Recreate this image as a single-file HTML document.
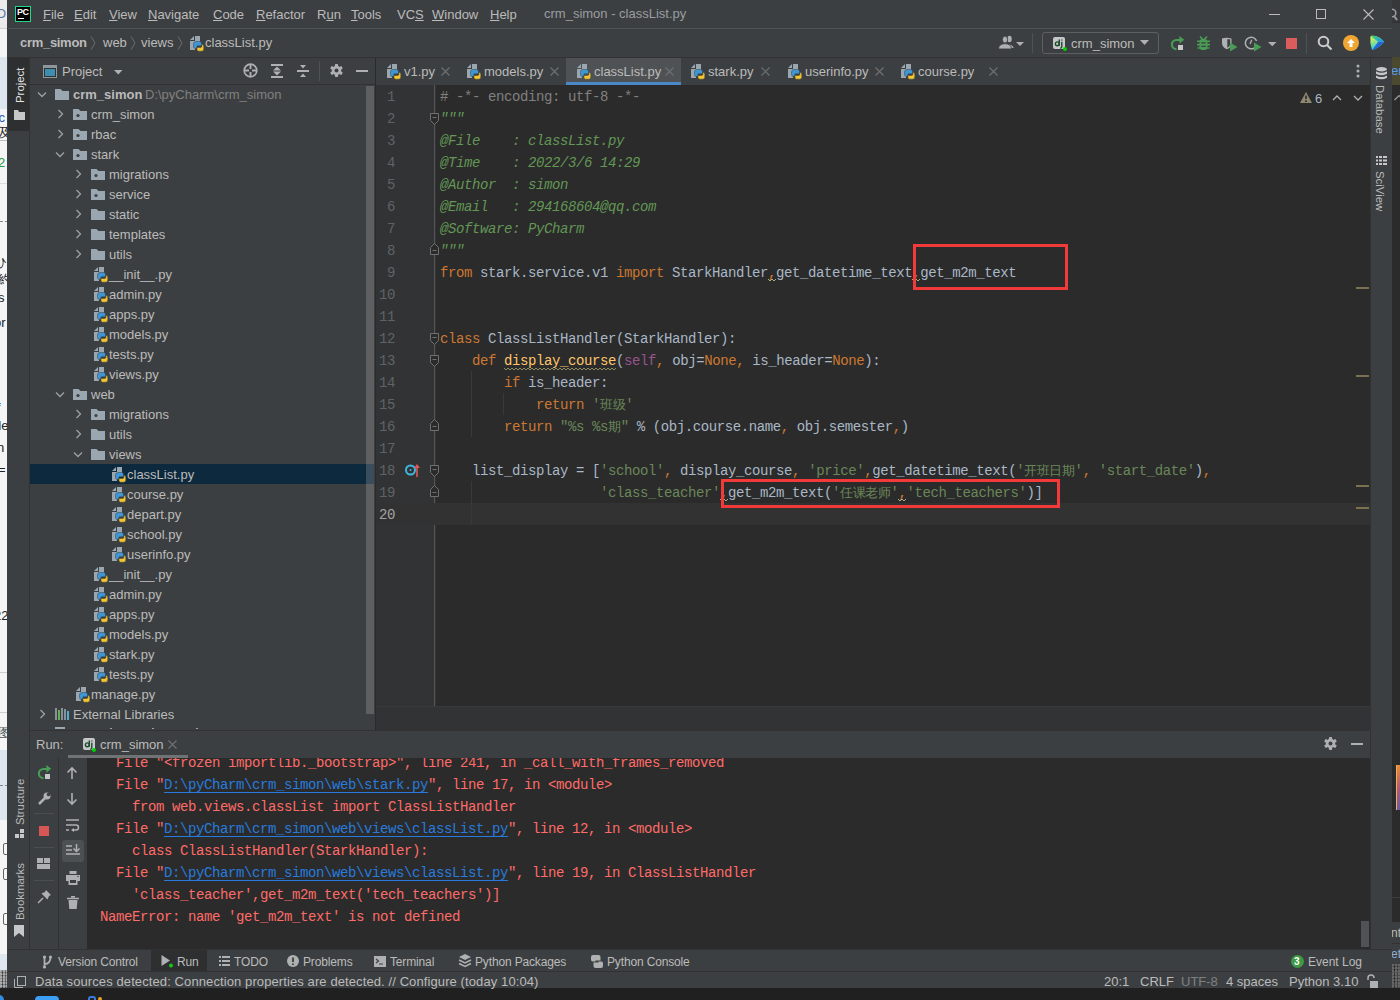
<!DOCTYPE html>
<html><head><meta charset="utf-8"><style>
*{margin:0;padding:0;box-sizing:border-box}
html,body{width:1400px;height:1000px;overflow:hidden;background:#2b2b2b;font-family:"Liberation Sans", sans-serif;}
.a{position:absolute}
.t{position:absolute;white-space:pre;font-family:"Liberation Sans", sans-serif;font-size:13px;color:#bbbbbb;line-height:16px}
.s{position:absolute;white-space:pre;font-family:"Liberation Sans", sans-serif;font-size:12px;color:#bbbbbb;line-height:14px}
.v{font-size:11.4px !important}
.m{position:absolute;white-space:pre;font-family:"Liberation Mono", monospace;font-size:14px;letter-spacing:-0.4px;line-height:22px;color:#a9b7c6}
.kw{color:#cc7832} .str{color:#6a8759} .doc{color:#629755;font-style:italic} .cm{color:#808080} .slf{color:#94558d} .fn{color:#ffc66d} .cj{font-size:13px;letter-spacing:-0.4px}
.er{color:#ff6b68} .lk{color:#287bde;text-decoration:underline;text-underline-offset:3px}
svg{position:absolute;overflow:visible}
</style></head><body>

<div class="a" style="left:0;top:0;width:8px;height:1000px;background:#f5f5f5"></div>
<div class="a" style="left:0;top:0;width:8px;height:28px;background:#ebebeb"></div>
<div class="t" style="left:-4px;top:6px;color:#5a7ca8">O</div>
<div class="a" style="left:0;top:28px;width:8px;height:1px;background:#d0d0d0"></div>
<div class="a" style="left:0;top:57px;width:8px;height:52px;background:#dde5ee"></div>
<div class="t" style="left:-5px;top:110px;color:#2a5db0">.c</div>
<div class="t" style="left:-2px;top:125px;color:#222">及</div>
<div class="a" style="left:0;top:140px;width:8px;height:1px;background:#bbb"></div>
<div class="t" style="left:-2px;top:155px;color:#2a9a40">2</div>
<div class="a" style="left:0;top:183px;width:8px;height:1px;background:#ddd"></div>
<div class="a" style="left:0;top:221px;width:8px;height:1px;border-top:1px dashed #888"></div>
<div class="t" style="left:-6px;top:255px;color:#222">ひ</div>
<div class="t" style="left:-2px;top:272px;color:#222">約</div>
<div class="t" style="left:-2px;top:290px;color:#222">s</div>
<div class="t" style="left:-6px;top:315px;color:#222">or</div>
<div class="t" style="left:-3px;top:400px;color:#2a5db0">f</div>
<div class="t" style="left:-6px;top:418px;color:#222">de</div>
<div class="t" style="left:-3px;top:440px;color:#222">n</div>
<div class="t" style="left:-2px;top:462px;color:#222">=</div>
<div class="t" style="left:-6px;top:608px;color:#222">22</div>
<div class="a" style="left:0;top:672px;width:8px;height:1px;background:#ccc"></div>
<div class="a" style="left:0;top:712px;width:8px;height:1px;background:#ccc"></div>
<div class="t" style="left:-2px;top:725px;color:#555">图</div>
<div class="a" style="left:0;top:750px;width:8px;height:70px;background:#dde5ee"></div>
<div class="a" style="left:0;top:785px;width:8px;height:1px;border-top:1px dashed #888"></div>
<div class="a" style="left:3px;top:843px;width:6px;height:12px;border:1px solid #666;border-radius:2px"></div>
<div class="a" style="left:3px;top:868px;width:6px;height:12px;border:1px solid #666;border-radius:2px"></div>
<div class="a" style="left:3px;top:913px;width:6px;height:12px;border:1px solid #666;border-radius:2px"></div>
<div class="a" style="left:0;top:954px;width:8px;height:16px;background:#dfe6ee"></div>
<div class="a" style="left:0;top:970px;width:8px;height:18px;background:radial-gradient(circle at 30% 40%,#aaa 0 1px,transparent 2px) 0 0/3px 3px,radial-gradient(circle at 70% 60%,#333 0 1px,transparent 2px) 0 0/4px 4px,#666"></div>
<div class="a" style="left:1392px;top:0;width:8px;height:1000px;background:#2b2b2b"></div>
<div class="a" style="left:1392px;top:0;width:8px;height:22px;background:#36383a"></div>
<svg style="left:1390px;top:8px" width="10" height="14"><circle cx="2" cy="5" r="3.8" stroke="#9a9da0" stroke-width="1.6" fill="none"/><path d="M4.5 8.5l2.5 3.5" stroke="#9a9da0" stroke-width="2"/></svg>
<div class="a" style="left:1392px;top:22px;width:8px;height:1px;background:#323232"></div>
<div class="a" style="left:1392px;top:23px;width:8px;height:34px;background:#3c3f41"></div>
<div class="a" style="left:1392px;top:57px;width:8px;height:28px;background:#4b4a30"></div>
<div class="t" style="left:1391px;top:63px;color:#589df6">er</div>
<svg style="left:1394px;top:95px" width="8" height="6"><path d="M0.5 5L5 0.5L9.5 5" stroke="#9a9da0" stroke-width="1.2" fill="none"/></svg>
<div class="a" style="left:1396px;top:765px;width:4px;height:45px;background:linear-gradient(180deg,#e98b3a,#b05a7a,#6a5aa8);border-left:1px solid #f0b050"></div>
<div class="a" style="left:1392px;top:897px;width:8px;height:1px;background:#3c3f41"></div>
<div class="a" style="left:1392px;top:922px;width:8px;height:42px;background:#3c3f41"></div>
<div class="s" style="left:1391px;top:926px;color:#bbbbbb">nt</div>
<div class="a" style="left:1392px;top:943px;width:8px;height:1px;background:#323232"></div>
<div class="s" style="left:1391px;top:947px;color:#8fb0d8">et</div>
<div class="a" style="left:1392px;top:964px;width:8px;height:24px;background:radial-gradient(circle at 30% 40%,#666 0 1px,transparent 2px) 0 0/3px 3px,radial-gradient(circle at 70% 60%,#222 0 1px,transparent 2px) 0 0/4px 4px,#4a4a4a"></div>
<div class="a" style="left:0;top:988px;width:1400px;height:12px;background:#202020"></div>
<div class="a" style="left:-6px;top:995px;width:10px;height:10px;border-radius:50%;background:#2f8fe8"></div>
<div class="a" style="left:35px;top:996px;width:24px;height:8px;border-radius:4px;background:#3a9ff5"></div>
<div class="a" style="left:88px;top:996px;width:8px;height:6px;border-radius:3px 3px 0 0;border:2px solid #3b7be0;border-bottom:none"></div>
<div class="a" style="left:98px;top:997px;width:4px;height:4px;border-radius:50%;background:#f0a020"></div>
<div class="a" style="left:7px;top:0;width:1385px;height:988px;background:#3c3f41"></div>
<div class="a" style="left:8px;top:28px;width:1384px;height:1px;background:#4f5355"></div>
<div class="a" style="left:15px;top:6px;width:16px;height:16px;background:#000;border:1px solid #21d789"></div>
<div class="a" style="left:17px;top:7px;font:bold 9px/10px 'Liberation Sans';color:#fff;letter-spacing:-0.5px">PC</div>
<div class="a" style="left:18px;top:18px;width:6px;height:1px;background:#fff"></div>
<div class="t" style="left:43px;top:7px"><span style="text-decoration:underline;text-underline-offset:1px">F</span>ile</div>
<div class="t" style="left:74px;top:7px"><span style="text-decoration:underline;text-underline-offset:1px">E</span>dit</div>
<div class="t" style="left:109px;top:7px"><span style="text-decoration:underline;text-underline-offset:1px">V</span>iew</div>
<div class="t" style="left:148px;top:7px"><span style="text-decoration:underline;text-underline-offset:1px">N</span>avigate</div>
<div class="t" style="left:213px;top:7px"><span style="text-decoration:underline;text-underline-offset:1px">C</span>ode</div>
<div class="t" style="left:256px;top:7px"><span style="text-decoration:underline;text-underline-offset:1px">R</span>efactor</div>
<div class="t" style="left:317px;top:7px">R<span style="text-decoration:underline;text-underline-offset:1px">u</span>n</div>
<div class="t" style="left:351px;top:7px"><span style="text-decoration:underline;text-underline-offset:1px">T</span>ools</div>
<div class="t" style="left:397px;top:7px">VC<span style="text-decoration:underline;text-underline-offset:1px">S</span></div>
<div class="t" style="left:432px;top:7px"><span style="text-decoration:underline;text-underline-offset:1px">W</span>indow</div>
<div class="t" style="left:490px;top:7px"><span style="text-decoration:underline;text-underline-offset:1px">H</span>elp</div>
<div class="t" style="left:544px;top:6px;color:#9a9da0">crm_simon - classList.py</div>
<div class="a" style="left:1269px;top:14px;width:11px;height:1px;background:#bbb"></div>
<div class="a" style="left:1316px;top:9px;width:10px;height:10px;border:1px solid #bbb"></div>
<svg style="left:1363px;top:9px" width="11" height="11"><path d="M0.5 0.5L10.5 10.5M10.5 0.5L0.5 10.5" stroke="#bbb" stroke-width="1.1"/></svg>
<div class="a" style="left:8px;top:57px;width:1384px;height:1px;background:#323232"></div>
<div class="t" style="left:20px;top:35px;font-weight:bold;letter-spacing:-0.3px">crm_simon</div>
<svg style="left:90px;top:36px" width="6" height="14"><path d="M1 0.5L5 7L1 13.5" stroke="#6b6e70" fill="none"/></svg>
<div class="t" style="left:103px;top:35px">web</div>
<svg style="left:130px;top:36px" width="6" height="14"><path d="M1 0.5L5 7L1 13.5" stroke="#6b6e70" fill="none"/></svg>
<div class="t" style="left:141px;top:35px">views</div>
<svg style="left:177px;top:36px" width="6" height="14"><path d="M1 0.5L5 7L1 13.5" stroke="#6b6e70" fill="none"/></svg>
<svg style="left:189px;top:35px" width="16" height="16" viewBox="0 0 16 16"><path d="M1 5L5 1V5Z" fill="#9aa7b0"/><path d="M6 1H11V8H6Z" fill="#9aa7b0"/><path d="M1 6H6V15H1Z" fill="#9aa7b0"/><path d="M7 6.5H10.8Q12.5 6.5 12.5 8.2V10.8H8.8Q7.8 10.8 7.8 11.8V13.5H6.5Q4.5 13.5 4.5 11.5V9Q4.5 6.5 7 6.5Z" fill="#3d96d6" stroke="#3c3f41" stroke-width="0.5"/><path d="M9.5 16.2H12.8Q14.8 16.2 14.8 14V11.2Q14.8 9.2 12.9 9.2V11.3Q12.9 12.4 11.8 12.4H8V14.5Q8 16.2 9.5 16.2Z" fill="#f3c52e" stroke="#3c3f41" stroke-width="0.5"/></svg>
<div class="t" style="left:205px;top:35px">classList.py</div>
<svg style="left:998px;top:35px" width="28" height="16"><ellipse cx="11.5" cy="4" rx="2.2" ry="3.2" fill="#aeb0b2"/><path d="M9 9.5Q14 9 15.5 12.5V13H10Z" fill="#aeb0b2"/><ellipse cx="7" cy="4.6" rx="2.6" ry="3.5" fill="#aeb0b2" stroke="#3c3f41" stroke-width="0.9"/><path d="M0.5 14Q0.5 9 7 8.6Q13.5 9 13.5 14Z" fill="#aeb0b2" stroke="#3c3f41" stroke-width="0.9"/><path d="M18 7h8l-4 4z" fill="#aeb0b2"/></svg>
<div class="a" style="left:1032px;top:33px;width:1px;height:20px;background:#515151"></div>
<div class="a" style="left:1042px;top:32px;width:117px;height:22px;border:1px solid #5e6060;border-radius:3px"></div>
<div class="a" style="left:1053px;top:37px;width:12px;height:12px;background:#c5c7c9;border-radius:2px"></div>
<svg style="left:1053px;top:37px" width="12" height="12"><circle cx="4.3" cy="6.8" r="1.9" stroke="#1d4a2a" stroke-width="1.4" fill="none"/><path d="M6.3 2.5v6.3M8.8 4.8v4.8q0 1.6-1.6 1.6M8.8 2.5v1" stroke="#1d4a2a" stroke-width="1.4" fill="none"/></svg>
<div class="a" style="left:1063px;top:47px;width:4px;height:4px;background:#00d000;border-radius:50%"></div>
<div class="t" style="left:1071px;top:36px">crm_simon</div>
<svg style="left:1140px;top:40px" width="9" height="6"><path d="M0 0h9l-4.5 5z" fill="#aeb0b2"/></svg>
<svg style="left:1170px;top:35px" width="16" height="16"><path d="M6.5 14.2A4.6 4.6 0 0 1 6.5 5H10" stroke="#499c54" stroke-width="2.1" fill="none"/><path d="M9.4 0.9L14.2 4.8L9.4 8.8Z" fill="#499c54"/><rect x="8" y="10" width="5" height="5" fill="#c4c6c8"/></svg>
<svg style="left:1197px;top:36px" width="13" height="14"><path d="M3 0.5L5.5 3.2M10 0.5L7.5 3.2M0 5.2H13M0 8.6H13M0.5 12H12.5" stroke="#499c54" stroke-width="1.6"/><rect x="2.5" y="2.8" width="8" height="11.2" rx="3.6" fill="#499c54"/><path d="M4.3 6.9H8.7M4.3 10.3H8.7" stroke="#3c3f41" stroke-width="1.3"/></svg>
<svg style="left:1221px;top:37px" width="17" height="15"><path d="M1 1.5Q5 0 10.5 1.5V6Q10.5 10.5 6 12.2Q1 10.5 1 6Z" fill="#aeb0b2"/><path d="M6.3 2.2H9.2V6Q9.2 9.5 6.3 10.8Z" fill="#3c3f41"/><path d="M9 5.5l7.5 4.5l-7.5 4.5z" fill="#499c54"/></svg>
<svg style="left:1245px;top:36px" width="17" height="16"><path d="M9.5 11.8A5.8 5.8 0 1 1 11.6 5" stroke="#aeb0b2" stroke-width="1.5" fill="none"/><path d="M6.8 3.8L5 8" stroke="#aeb0b2" stroke-width="1.3"/><path d="M9 6.5l7.5 4.5l-7.5 4.5z" fill="#499c54"/></svg>
<svg style="left:1268px;top:42px" width="9" height="6"><path d="M0 0h8.5l-4.25 4.2z" fill="#aeb0b2"/></svg>
<div class="a" style="left:1286px;top:38px;width:11px;height:11px;background:#db5c5c"></div>
<div class="a" style="left:1306px;top:33px;width:1px;height:21px;background:#515151"></div>
<svg style="left:1317px;top:35px" width="16" height="16"><circle cx="6.5" cy="6.5" r="4.8" stroke="#c9cbcd" stroke-width="2" fill="none"/><path d="M10 10l4.5 4.5" stroke="#c9cbcd" stroke-width="2.2"/></svg>
<div class="a" style="left:1343px;top:35px;width:16px;height:16px;border-radius:50%;background:#f0a732"></div>
<svg style="left:1346px;top:38px" width="10" height="10"><path d="M5 1L1 5h2.5v4h3V5H9z" fill="#fff"/></svg>
<svg style="left:1370px;top:35px" width="15" height="16"><defs><linearGradient id="tbl" x1="0" y1="0" x2="0.3" y2="1"><stop offset="0" stop-color="#fbf53a"/><stop offset="1" stop-color="#20cde6"/></linearGradient><linearGradient id="tbr" x1="0" y1="0" x2="1" y2="0.6"><stop offset="0" stop-color="#3fd872"/><stop offset="1" stop-color="#1b9cf0"/></linearGradient></defs><path d="M0.5 1Q8 0 14 6.8Q9 13.5 2 15Q-0.5 8 0.5 1Z" fill="url(#tbl)"/><path d="M0.5 1Q8 0 14 6.8H8.3Z" fill="url(#tbr)"/><path d="M8.3 6.8H14Q9 13.5 2 15Z" fill="#2368d6"/></svg>
<div class="a" style="left:29px;top:58px;width:1px;height:892px;background:#323232"></div>
<div class="a" style="left:8px;top:58px;width:21px;height:73px;background:#2d2f30"></div>
<div class="s v" style="transform:rotate(-90deg);transform-origin:left top;top:103px;left:13px;color:#e4e6e8">Project</div>
<svg style="left:14px;top:109px" width="12" height="11"><path d="M0 1h4l1 2h6v8h-11z" fill="#c5c7c9"/></svg>
<div class="a" style="left:30px;top:84px;width:346px;height:1px;background:#323232"></div>
<svg style="left:43px;top:65px" width="14" height="13"><rect width="14" height="13" fill="#8d979c"/><rect x="1" y="3" width="12" height="9" fill="#303234"/><rect x="2" y="4" width="10" height="7" fill="#3e8eb2"/></svg>
<div class="t" style="left:62px;top:64px">Project</div>
<svg style="left:114px;top:70px" width="9" height="6"><path d="M0 0h8.5l-4.25 4.5z" fill="#aeb0b2"/></svg>
<svg style="left:243px;top:63px" width="15" height="15"><circle cx="7.5" cy="7.5" r="6.3" stroke="#aeb0b2" stroke-width="1.7" fill="none"/><path d="M7.5 1.5V6M7.5 9V13.5M1.5 7.5H6M9 7.5H13.5" stroke="#aeb0b2" stroke-width="1.9"/></svg>
<svg style="left:271px;top:64px" width="12" height="14"><path d="M0 1H12M0 13H12" stroke="#aeb0b2" stroke-width="2"/><path d="M6 2.6L10 6.6H2Z M2 7.4H10L6 11.4Z" fill="#aeb0b2"/></svg>
<svg style="left:297px;top:64px" width="12" height="14"><path d="M0 7H12" stroke="#aeb0b2" stroke-width="2"/><path d="M3 1H9L6 4.5Z M6 9.5L9 13H3Z" fill="#aeb0b2"/></svg>
<div class="a" style="left:319px;top:61px;width:1px;height:20px;background:#515151"></div>
<svg style="left:330px;top:64px" width="13" height="13"><rect x="4.9" y="0" width="3.2" height="13" rx="0.8" transform="rotate(0 6.5 6.5)" fill="#aeb0b2"/><rect x="4.9" y="0" width="3.2" height="13" rx="0.8" transform="rotate(60 6.5 6.5)" fill="#aeb0b2"/><rect x="4.9" y="0" width="3.2" height="13" rx="0.8" transform="rotate(120 6.5 6.5)" fill="#aeb0b2"/><circle cx="6.5" cy="6.5" r="4.68" fill="#aeb0b2"/><circle cx="6.5" cy="6.5" r="1.95" fill="#3c3f41"/></svg>
<div class="a" style="left:356px;top:70px;width:12px;height:2px;background:#aeb0b2"></div>
<div class="a" style="left:366px;top:86px;width:8px;height:628px;background:#5d5f61"></div>
<div class="a" style="left:375px;top:58px;width:1px;height:672px;background:#2b2b2b"></div>
<div class="a" style="left:30px;top:464px;width:336px;height:20px;background:#0d293e"></div>
<div class="a" style="left:366px;top:464px;width:8px;height:20px;background:#3a4d5c"></div>
<svg style="left:37px;top:91px" width="10" height="8"><path d="M1 1.5L5 5.5L9 1.5" stroke="#9da0a2" stroke-width="1.3" fill="none"/></svg>
<svg style="left:55px;top:86px" width="16" height="16" viewBox="0 0 16 16"><path d="M0 3H5.5L7.5 5H14V14H0Z" fill="#9aa7b0"/></svg>
<div class="t" style="left:73px;top:87px;font-weight:bold">crm_simon</div>
<div class="t" style="left:145px;top:87px;color:#808080">D:\pyCharm\crm_simon</div>
<svg style="left:57px;top:109px" width="8" height="10"><path d="M1.5 1L5.5 5L1.5 9" stroke="#9da0a2" stroke-width="1.3" fill="none"/></svg>
<svg style="left:73px;top:106px" width="16" height="16" viewBox="0 0 16 16"><path d="M0 3H5.5L7.5 5H14V14H0Z" fill="#9aa7b0"/><circle cx="5" cy="9.5" r="1.6" fill="#3c3f41"/></svg>
<div class="t" style="left:91px;top:107px">crm_simon</div>
<svg style="left:57px;top:129px" width="8" height="10"><path d="M1.5 1L5.5 5L1.5 9" stroke="#9da0a2" stroke-width="1.3" fill="none"/></svg>
<svg style="left:73px;top:126px" width="16" height="16" viewBox="0 0 16 16"><path d="M0 3H5.5L7.5 5H14V14H0Z" fill="#9aa7b0"/><circle cx="5" cy="9.5" r="1.6" fill="#3c3f41"/></svg>
<div class="t" style="left:91px;top:127px">rbac</div>
<svg style="left:55px;top:151px" width="10" height="8"><path d="M1 1.5L5 5.5L9 1.5" stroke="#9da0a2" stroke-width="1.3" fill="none"/></svg>
<svg style="left:73px;top:146px" width="16" height="16" viewBox="0 0 16 16"><path d="M0 3H5.5L7.5 5H14V14H0Z" fill="#9aa7b0"/><circle cx="5" cy="9.5" r="1.6" fill="#3c3f41"/></svg>
<div class="t" style="left:91px;top:147px">stark</div>
<svg style="left:75px;top:169px" width="8" height="10"><path d="M1.5 1L5.5 5L1.5 9" stroke="#9da0a2" stroke-width="1.3" fill="none"/></svg>
<svg style="left:91px;top:166px" width="16" height="16" viewBox="0 0 16 16"><path d="M0 3H5.5L7.5 5H14V14H0Z" fill="#9aa7b0"/><circle cx="5" cy="9.5" r="1.6" fill="#3c3f41"/></svg>
<div class="t" style="left:109px;top:167px">migrations</div>
<svg style="left:75px;top:189px" width="8" height="10"><path d="M1.5 1L5.5 5L1.5 9" stroke="#9da0a2" stroke-width="1.3" fill="none"/></svg>
<svg style="left:91px;top:186px" width="16" height="16" viewBox="0 0 16 16"><path d="M0 3H5.5L7.5 5H14V14H0Z" fill="#9aa7b0"/><circle cx="5" cy="9.5" r="1.6" fill="#3c3f41"/></svg>
<div class="t" style="left:109px;top:187px">service</div>
<svg style="left:75px;top:209px" width="8" height="10"><path d="M1.5 1L5.5 5L1.5 9" stroke="#9da0a2" stroke-width="1.3" fill="none"/></svg>
<svg style="left:91px;top:206px" width="16" height="16" viewBox="0 0 16 16"><path d="M0 3H5.5L7.5 5H14V14H0Z" fill="#9aa7b0"/></svg>
<div class="t" style="left:109px;top:207px">static</div>
<svg style="left:75px;top:229px" width="8" height="10"><path d="M1.5 1L5.5 5L1.5 9" stroke="#9da0a2" stroke-width="1.3" fill="none"/></svg>
<svg style="left:91px;top:226px" width="16" height="16" viewBox="0 0 16 16"><path d="M0 3H5.5L7.5 5H14V14H0Z" fill="#9aa7b0"/></svg>
<div class="t" style="left:109px;top:227px">templates</div>
<svg style="left:75px;top:249px" width="8" height="10"><path d="M1.5 1L5.5 5L1.5 9" stroke="#9da0a2" stroke-width="1.3" fill="none"/></svg>
<svg style="left:91px;top:246px" width="16" height="16" viewBox="0 0 16 16"><path d="M0 3H5.5L7.5 5H14V14H0Z" fill="#9aa7b0"/></svg>
<div class="t" style="left:109px;top:247px">utils</div>
<svg style="left:93px;top:266px" width="16" height="16" viewBox="0 0 16 16"><path d="M1 5L5 1V5Z" fill="#9aa7b0"/><path d="M6 1H11V8H6Z" fill="#9aa7b0"/><path d="M1 6H6V15H1Z" fill="#9aa7b0"/><path d="M7 6.5H10.8Q12.5 6.5 12.5 8.2V10.8H8.8Q7.8 10.8 7.8 11.8V13.5H6.5Q4.5 13.5 4.5 11.5V9Q4.5 6.5 7 6.5Z" fill="#3d96d6" stroke="#3c3f41" stroke-width="0.5"/><path d="M9.5 16.2H12.8Q14.8 16.2 14.8 14V11.2Q14.8 9.2 12.9 9.2V11.3Q12.9 12.4 11.8 12.4H8V14.5Q8 16.2 9.5 16.2Z" fill="#f3c52e" stroke="#3c3f41" stroke-width="0.5"/></svg>
<div class="t" style="left:109px;top:267px">__init__.py</div>
<svg style="left:93px;top:286px" width="16" height="16" viewBox="0 0 16 16"><path d="M1 5L5 1V5Z" fill="#9aa7b0"/><path d="M6 1H11V8H6Z" fill="#9aa7b0"/><path d="M1 6H6V15H1Z" fill="#9aa7b0"/><path d="M7 6.5H10.8Q12.5 6.5 12.5 8.2V10.8H8.8Q7.8 10.8 7.8 11.8V13.5H6.5Q4.5 13.5 4.5 11.5V9Q4.5 6.5 7 6.5Z" fill="#3d96d6" stroke="#3c3f41" stroke-width="0.5"/><path d="M9.5 16.2H12.8Q14.8 16.2 14.8 14V11.2Q14.8 9.2 12.9 9.2V11.3Q12.9 12.4 11.8 12.4H8V14.5Q8 16.2 9.5 16.2Z" fill="#f3c52e" stroke="#3c3f41" stroke-width="0.5"/></svg>
<div class="t" style="left:109px;top:287px">admin.py</div>
<svg style="left:93px;top:306px" width="16" height="16" viewBox="0 0 16 16"><path d="M1 5L5 1V5Z" fill="#9aa7b0"/><path d="M6 1H11V8H6Z" fill="#9aa7b0"/><path d="M1 6H6V15H1Z" fill="#9aa7b0"/><path d="M7 6.5H10.8Q12.5 6.5 12.5 8.2V10.8H8.8Q7.8 10.8 7.8 11.8V13.5H6.5Q4.5 13.5 4.5 11.5V9Q4.5 6.5 7 6.5Z" fill="#3d96d6" stroke="#3c3f41" stroke-width="0.5"/><path d="M9.5 16.2H12.8Q14.8 16.2 14.8 14V11.2Q14.8 9.2 12.9 9.2V11.3Q12.9 12.4 11.8 12.4H8V14.5Q8 16.2 9.5 16.2Z" fill="#f3c52e" stroke="#3c3f41" stroke-width="0.5"/></svg>
<div class="t" style="left:109px;top:307px">apps.py</div>
<svg style="left:93px;top:326px" width="16" height="16" viewBox="0 0 16 16"><path d="M1 5L5 1V5Z" fill="#9aa7b0"/><path d="M6 1H11V8H6Z" fill="#9aa7b0"/><path d="M1 6H6V15H1Z" fill="#9aa7b0"/><path d="M7 6.5H10.8Q12.5 6.5 12.5 8.2V10.8H8.8Q7.8 10.8 7.8 11.8V13.5H6.5Q4.5 13.5 4.5 11.5V9Q4.5 6.5 7 6.5Z" fill="#3d96d6" stroke="#3c3f41" stroke-width="0.5"/><path d="M9.5 16.2H12.8Q14.8 16.2 14.8 14V11.2Q14.8 9.2 12.9 9.2V11.3Q12.9 12.4 11.8 12.4H8V14.5Q8 16.2 9.5 16.2Z" fill="#f3c52e" stroke="#3c3f41" stroke-width="0.5"/></svg>
<div class="t" style="left:109px;top:327px">models.py</div>
<svg style="left:93px;top:346px" width="16" height="16" viewBox="0 0 16 16"><path d="M1 5L5 1V5Z" fill="#9aa7b0"/><path d="M6 1H11V8H6Z" fill="#9aa7b0"/><path d="M1 6H6V15H1Z" fill="#9aa7b0"/><path d="M7 6.5H10.8Q12.5 6.5 12.5 8.2V10.8H8.8Q7.8 10.8 7.8 11.8V13.5H6.5Q4.5 13.5 4.5 11.5V9Q4.5 6.5 7 6.5Z" fill="#3d96d6" stroke="#3c3f41" stroke-width="0.5"/><path d="M9.5 16.2H12.8Q14.8 16.2 14.8 14V11.2Q14.8 9.2 12.9 9.2V11.3Q12.9 12.4 11.8 12.4H8V14.5Q8 16.2 9.5 16.2Z" fill="#f3c52e" stroke="#3c3f41" stroke-width="0.5"/></svg>
<div class="t" style="left:109px;top:347px">tests.py</div>
<svg style="left:93px;top:366px" width="16" height="16" viewBox="0 0 16 16"><path d="M1 5L5 1V5Z" fill="#9aa7b0"/><path d="M6 1H11V8H6Z" fill="#9aa7b0"/><path d="M1 6H6V15H1Z" fill="#9aa7b0"/><path d="M7 6.5H10.8Q12.5 6.5 12.5 8.2V10.8H8.8Q7.8 10.8 7.8 11.8V13.5H6.5Q4.5 13.5 4.5 11.5V9Q4.5 6.5 7 6.5Z" fill="#3d96d6" stroke="#3c3f41" stroke-width="0.5"/><path d="M9.5 16.2H12.8Q14.8 16.2 14.8 14V11.2Q14.8 9.2 12.9 9.2V11.3Q12.9 12.4 11.8 12.4H8V14.5Q8 16.2 9.5 16.2Z" fill="#f3c52e" stroke="#3c3f41" stroke-width="0.5"/></svg>
<div class="t" style="left:109px;top:367px">views.py</div>
<svg style="left:55px;top:391px" width="10" height="8"><path d="M1 1.5L5 5.5L9 1.5" stroke="#9da0a2" stroke-width="1.3" fill="none"/></svg>
<svg style="left:73px;top:386px" width="16" height="16" viewBox="0 0 16 16"><path d="M0 3H5.5L7.5 5H14V14H0Z" fill="#9aa7b0"/><circle cx="5" cy="9.5" r="1.6" fill="#3c3f41"/></svg>
<div class="t" style="left:91px;top:387px">web</div>
<svg style="left:75px;top:409px" width="8" height="10"><path d="M1.5 1L5.5 5L1.5 9" stroke="#9da0a2" stroke-width="1.3" fill="none"/></svg>
<svg style="left:91px;top:406px" width="16" height="16" viewBox="0 0 16 16"><path d="M0 3H5.5L7.5 5H14V14H0Z" fill="#9aa7b0"/><circle cx="5" cy="9.5" r="1.6" fill="#3c3f41"/></svg>
<div class="t" style="left:109px;top:407px">migrations</div>
<svg style="left:75px;top:429px" width="8" height="10"><path d="M1.5 1L5.5 5L1.5 9" stroke="#9da0a2" stroke-width="1.3" fill="none"/></svg>
<svg style="left:91px;top:426px" width="16" height="16" viewBox="0 0 16 16"><path d="M0 3H5.5L7.5 5H14V14H0Z" fill="#9aa7b0"/></svg>
<div class="t" style="left:109px;top:427px">utils</div>
<svg style="left:73px;top:451px" width="10" height="8"><path d="M1 1.5L5 5.5L9 1.5" stroke="#9da0a2" stroke-width="1.3" fill="none"/></svg>
<svg style="left:91px;top:446px" width="16" height="16" viewBox="0 0 16 16"><path d="M0 3H5.5L7.5 5H14V14H0Z" fill="#9aa7b0"/></svg>
<div class="t" style="left:109px;top:447px">views</div>
<svg style="left:111px;top:466px" width="16" height="16" viewBox="0 0 16 16"><path d="M1 5L5 1V5Z" fill="#9aa7b0"/><path d="M6 1H11V8H6Z" fill="#9aa7b0"/><path d="M1 6H6V15H1Z" fill="#9aa7b0"/><path d="M7 6.5H10.8Q12.5 6.5 12.5 8.2V10.8H8.8Q7.8 10.8 7.8 11.8V13.5H6.5Q4.5 13.5 4.5 11.5V9Q4.5 6.5 7 6.5Z" fill="#3d96d6" stroke="#3c3f41" stroke-width="0.5"/><path d="M9.5 16.2H12.8Q14.8 16.2 14.8 14V11.2Q14.8 9.2 12.9 9.2V11.3Q12.9 12.4 11.8 12.4H8V14.5Q8 16.2 9.5 16.2Z" fill="#f3c52e" stroke="#3c3f41" stroke-width="0.5"/></svg>
<div class="t" style="left:127px;top:467px">classList.py</div>
<svg style="left:111px;top:486px" width="16" height="16" viewBox="0 0 16 16"><path d="M1 5L5 1V5Z" fill="#9aa7b0"/><path d="M6 1H11V8H6Z" fill="#9aa7b0"/><path d="M1 6H6V15H1Z" fill="#9aa7b0"/><path d="M7 6.5H10.8Q12.5 6.5 12.5 8.2V10.8H8.8Q7.8 10.8 7.8 11.8V13.5H6.5Q4.5 13.5 4.5 11.5V9Q4.5 6.5 7 6.5Z" fill="#3d96d6" stroke="#3c3f41" stroke-width="0.5"/><path d="M9.5 16.2H12.8Q14.8 16.2 14.8 14V11.2Q14.8 9.2 12.9 9.2V11.3Q12.9 12.4 11.8 12.4H8V14.5Q8 16.2 9.5 16.2Z" fill="#f3c52e" stroke="#3c3f41" stroke-width="0.5"/></svg>
<div class="t" style="left:127px;top:487px">course.py</div>
<svg style="left:111px;top:506px" width="16" height="16" viewBox="0 0 16 16"><path d="M1 5L5 1V5Z" fill="#9aa7b0"/><path d="M6 1H11V8H6Z" fill="#9aa7b0"/><path d="M1 6H6V15H1Z" fill="#9aa7b0"/><path d="M7 6.5H10.8Q12.5 6.5 12.5 8.2V10.8H8.8Q7.8 10.8 7.8 11.8V13.5H6.5Q4.5 13.5 4.5 11.5V9Q4.5 6.5 7 6.5Z" fill="#3d96d6" stroke="#3c3f41" stroke-width="0.5"/><path d="M9.5 16.2H12.8Q14.8 16.2 14.8 14V11.2Q14.8 9.2 12.9 9.2V11.3Q12.9 12.4 11.8 12.4H8V14.5Q8 16.2 9.5 16.2Z" fill="#f3c52e" stroke="#3c3f41" stroke-width="0.5"/></svg>
<div class="t" style="left:127px;top:507px">depart.py</div>
<svg style="left:111px;top:526px" width="16" height="16" viewBox="0 0 16 16"><path d="M1 5L5 1V5Z" fill="#9aa7b0"/><path d="M6 1H11V8H6Z" fill="#9aa7b0"/><path d="M1 6H6V15H1Z" fill="#9aa7b0"/><path d="M7 6.5H10.8Q12.5 6.5 12.5 8.2V10.8H8.8Q7.8 10.8 7.8 11.8V13.5H6.5Q4.5 13.5 4.5 11.5V9Q4.5 6.5 7 6.5Z" fill="#3d96d6" stroke="#3c3f41" stroke-width="0.5"/><path d="M9.5 16.2H12.8Q14.8 16.2 14.8 14V11.2Q14.8 9.2 12.9 9.2V11.3Q12.9 12.4 11.8 12.4H8V14.5Q8 16.2 9.5 16.2Z" fill="#f3c52e" stroke="#3c3f41" stroke-width="0.5"/></svg>
<div class="t" style="left:127px;top:527px">school.py</div>
<svg style="left:111px;top:546px" width="16" height="16" viewBox="0 0 16 16"><path d="M1 5L5 1V5Z" fill="#9aa7b0"/><path d="M6 1H11V8H6Z" fill="#9aa7b0"/><path d="M1 6H6V15H1Z" fill="#9aa7b0"/><path d="M7 6.5H10.8Q12.5 6.5 12.5 8.2V10.8H8.8Q7.8 10.8 7.8 11.8V13.5H6.5Q4.5 13.5 4.5 11.5V9Q4.5 6.5 7 6.5Z" fill="#3d96d6" stroke="#3c3f41" stroke-width="0.5"/><path d="M9.5 16.2H12.8Q14.8 16.2 14.8 14V11.2Q14.8 9.2 12.9 9.2V11.3Q12.9 12.4 11.8 12.4H8V14.5Q8 16.2 9.5 16.2Z" fill="#f3c52e" stroke="#3c3f41" stroke-width="0.5"/></svg>
<div class="t" style="left:127px;top:547px">userinfo.py</div>
<svg style="left:93px;top:566px" width="16" height="16" viewBox="0 0 16 16"><path d="M1 5L5 1V5Z" fill="#9aa7b0"/><path d="M6 1H11V8H6Z" fill="#9aa7b0"/><path d="M1 6H6V15H1Z" fill="#9aa7b0"/><path d="M7 6.5H10.8Q12.5 6.5 12.5 8.2V10.8H8.8Q7.8 10.8 7.8 11.8V13.5H6.5Q4.5 13.5 4.5 11.5V9Q4.5 6.5 7 6.5Z" fill="#3d96d6" stroke="#3c3f41" stroke-width="0.5"/><path d="M9.5 16.2H12.8Q14.8 16.2 14.8 14V11.2Q14.8 9.2 12.9 9.2V11.3Q12.9 12.4 11.8 12.4H8V14.5Q8 16.2 9.5 16.2Z" fill="#f3c52e" stroke="#3c3f41" stroke-width="0.5"/></svg>
<div class="t" style="left:109px;top:567px">__init__.py</div>
<svg style="left:93px;top:586px" width="16" height="16" viewBox="0 0 16 16"><path d="M1 5L5 1V5Z" fill="#9aa7b0"/><path d="M6 1H11V8H6Z" fill="#9aa7b0"/><path d="M1 6H6V15H1Z" fill="#9aa7b0"/><path d="M7 6.5H10.8Q12.5 6.5 12.5 8.2V10.8H8.8Q7.8 10.8 7.8 11.8V13.5H6.5Q4.5 13.5 4.5 11.5V9Q4.5 6.5 7 6.5Z" fill="#3d96d6" stroke="#3c3f41" stroke-width="0.5"/><path d="M9.5 16.2H12.8Q14.8 16.2 14.8 14V11.2Q14.8 9.2 12.9 9.2V11.3Q12.9 12.4 11.8 12.4H8V14.5Q8 16.2 9.5 16.2Z" fill="#f3c52e" stroke="#3c3f41" stroke-width="0.5"/></svg>
<div class="t" style="left:109px;top:587px">admin.py</div>
<svg style="left:93px;top:606px" width="16" height="16" viewBox="0 0 16 16"><path d="M1 5L5 1V5Z" fill="#9aa7b0"/><path d="M6 1H11V8H6Z" fill="#9aa7b0"/><path d="M1 6H6V15H1Z" fill="#9aa7b0"/><path d="M7 6.5H10.8Q12.5 6.5 12.5 8.2V10.8H8.8Q7.8 10.8 7.8 11.8V13.5H6.5Q4.5 13.5 4.5 11.5V9Q4.5 6.5 7 6.5Z" fill="#3d96d6" stroke="#3c3f41" stroke-width="0.5"/><path d="M9.5 16.2H12.8Q14.8 16.2 14.8 14V11.2Q14.8 9.2 12.9 9.2V11.3Q12.9 12.4 11.8 12.4H8V14.5Q8 16.2 9.5 16.2Z" fill="#f3c52e" stroke="#3c3f41" stroke-width="0.5"/></svg>
<div class="t" style="left:109px;top:607px">apps.py</div>
<svg style="left:93px;top:626px" width="16" height="16" viewBox="0 0 16 16"><path d="M1 5L5 1V5Z" fill="#9aa7b0"/><path d="M6 1H11V8H6Z" fill="#9aa7b0"/><path d="M1 6H6V15H1Z" fill="#9aa7b0"/><path d="M7 6.5H10.8Q12.5 6.5 12.5 8.2V10.8H8.8Q7.8 10.8 7.8 11.8V13.5H6.5Q4.5 13.5 4.5 11.5V9Q4.5 6.5 7 6.5Z" fill="#3d96d6" stroke="#3c3f41" stroke-width="0.5"/><path d="M9.5 16.2H12.8Q14.8 16.2 14.8 14V11.2Q14.8 9.2 12.9 9.2V11.3Q12.9 12.4 11.8 12.4H8V14.5Q8 16.2 9.5 16.2Z" fill="#f3c52e" stroke="#3c3f41" stroke-width="0.5"/></svg>
<div class="t" style="left:109px;top:627px">models.py</div>
<svg style="left:93px;top:646px" width="16" height="16" viewBox="0 0 16 16"><path d="M1 5L5 1V5Z" fill="#9aa7b0"/><path d="M6 1H11V8H6Z" fill="#9aa7b0"/><path d="M1 6H6V15H1Z" fill="#9aa7b0"/><path d="M7 6.5H10.8Q12.5 6.5 12.5 8.2V10.8H8.8Q7.8 10.8 7.8 11.8V13.5H6.5Q4.5 13.5 4.5 11.5V9Q4.5 6.5 7 6.5Z" fill="#3d96d6" stroke="#3c3f41" stroke-width="0.5"/><path d="M9.5 16.2H12.8Q14.8 16.2 14.8 14V11.2Q14.8 9.2 12.9 9.2V11.3Q12.9 12.4 11.8 12.4H8V14.5Q8 16.2 9.5 16.2Z" fill="#f3c52e" stroke="#3c3f41" stroke-width="0.5"/></svg>
<div class="t" style="left:109px;top:647px">stark.py</div>
<svg style="left:93px;top:666px" width="16" height="16" viewBox="0 0 16 16"><path d="M1 5L5 1V5Z" fill="#9aa7b0"/><path d="M6 1H11V8H6Z" fill="#9aa7b0"/><path d="M1 6H6V15H1Z" fill="#9aa7b0"/><path d="M7 6.5H10.8Q12.5 6.5 12.5 8.2V10.8H8.8Q7.8 10.8 7.8 11.8V13.5H6.5Q4.5 13.5 4.5 11.5V9Q4.5 6.5 7 6.5Z" fill="#3d96d6" stroke="#3c3f41" stroke-width="0.5"/><path d="M9.5 16.2H12.8Q14.8 16.2 14.8 14V11.2Q14.8 9.2 12.9 9.2V11.3Q12.9 12.4 11.8 12.4H8V14.5Q8 16.2 9.5 16.2Z" fill="#f3c52e" stroke="#3c3f41" stroke-width="0.5"/></svg>
<div class="t" style="left:109px;top:667px">tests.py</div>
<svg style="left:75px;top:686px" width="16" height="16" viewBox="0 0 16 16"><path d="M1 5L5 1V5Z" fill="#9aa7b0"/><path d="M6 1H11V8H6Z" fill="#9aa7b0"/><path d="M1 6H6V15H1Z" fill="#9aa7b0"/><path d="M7 6.5H10.8Q12.5 6.5 12.5 8.2V10.8H8.8Q7.8 10.8 7.8 11.8V13.5H6.5Q4.5 13.5 4.5 11.5V9Q4.5 6.5 7 6.5Z" fill="#3d96d6" stroke="#3c3f41" stroke-width="0.5"/><path d="M9.5 16.2H12.8Q14.8 16.2 14.8 14V11.2Q14.8 9.2 12.9 9.2V11.3Q12.9 12.4 11.8 12.4H8V14.5Q8 16.2 9.5 16.2Z" fill="#f3c52e" stroke="#3c3f41" stroke-width="0.5"/></svg>
<div class="t" style="left:91px;top:687px">manage.py</div>
<svg style="left:39px;top:709px" width="8" height="10"><path d="M1.5 1L5.5 5L1.5 9" stroke="#9da0a2" stroke-width="1.3" fill="none"/></svg>
<svg style="left:55px;top:708px" width="16" height="12"><path d="M1 0v12M4 2v10M7 0v12M10 1v11M13 3v9" stroke="#9aa7b0" stroke-width="1.6"/><path d="M4 2v10" stroke="#62b543" stroke-width="1.6"/><path d="M13 3v9" stroke="#40b6e0" stroke-width="1.6"/></svg>
<div class="t" style="left:73px;top:707px">External Libraries</div>
<div class="a" style="left:55px;top:727px;width:10px;height:2px;background:#9aa7b0"></div>
<div class="a" style="left:110px;top:728px;width:2px;height:1px;background:#a0a0a0"></div>
<div class="a" style="left:152px;top:728px;width:2px;height:1px;background:#a0a0a0"></div>
<div class="a" style="left:196px;top:728px;width:2px;height:1px;background:#a0a0a0"></div>
<div class="a" style="left:376px;top:58px;width:994px;height:27px;background:#3c3f41"></div>
<div class="a" style="left:566px;top:58px;width:115px;height:27px;background:#4e5254"></div>
<div class="a" style="left:566px;top:82px;width:115px;height:3px;background:#4a88c7"></div>
<svg style="left:386px;top:63px" width="16" height="16" viewBox="0 0 16 16"><path d="M1 5L5 1V5Z" fill="#9aa7b0"/><path d="M6 1H11V8H6Z" fill="#9aa7b0"/><path d="M1 6H6V15H1Z" fill="#9aa7b0"/><path d="M7 6.5H10.8Q12.5 6.5 12.5 8.2V10.8H8.8Q7.8 10.8 7.8 11.8V13.5H6.5Q4.5 13.5 4.5 11.5V9Q4.5 6.5 7 6.5Z" fill="#3d96d6" stroke="#3c3f41" stroke-width="0.5"/><path d="M9.5 16.2H12.8Q14.8 16.2 14.8 14V11.2Q14.8 9.2 12.9 9.2V11.3Q12.9 12.4 11.8 12.4H8V14.5Q8 16.2 9.5 16.2Z" fill="#f3c52e" stroke="#3c3f41" stroke-width="0.5"/></svg>
<div class="t" style="left:404px;top:64px">v1.py</div>
<svg style="left:441px;top:67px" width="9" height="9"><path d="M0.5 0.5L8.5 8.5M8.5 0.5L0.5 8.5" stroke="#6e7173" stroke-width="1.1"/></svg>
<svg style="left:466px;top:63px" width="16" height="16" viewBox="0 0 16 16"><path d="M1 5L5 1V5Z" fill="#9aa7b0"/><path d="M6 1H11V8H6Z" fill="#9aa7b0"/><path d="M1 6H6V15H1Z" fill="#9aa7b0"/><path d="M7 6.5H10.8Q12.5 6.5 12.5 8.2V10.8H8.8Q7.8 10.8 7.8 11.8V13.5H6.5Q4.5 13.5 4.5 11.5V9Q4.5 6.5 7 6.5Z" fill="#3d96d6" stroke="#3c3f41" stroke-width="0.5"/><path d="M9.5 16.2H12.8Q14.8 16.2 14.8 14V11.2Q14.8 9.2 12.9 9.2V11.3Q12.9 12.4 11.8 12.4H8V14.5Q8 16.2 9.5 16.2Z" fill="#f3c52e" stroke="#3c3f41" stroke-width="0.5"/></svg>
<div class="t" style="left:484px;top:64px">models.py</div>
<svg style="left:550px;top:67px" width="9" height="9"><path d="M0.5 0.5L8.5 8.5M8.5 0.5L0.5 8.5" stroke="#6e7173" stroke-width="1.1"/></svg>
<svg style="left:576px;top:63px" width="16" height="16" viewBox="0 0 16 16"><path d="M1 5L5 1V5Z" fill="#9aa7b0"/><path d="M6 1H11V8H6Z" fill="#9aa7b0"/><path d="M1 6H6V15H1Z" fill="#9aa7b0"/><path d="M7 6.5H10.8Q12.5 6.5 12.5 8.2V10.8H8.8Q7.8 10.8 7.8 11.8V13.5H6.5Q4.5 13.5 4.5 11.5V9Q4.5 6.5 7 6.5Z" fill="#3d96d6" stroke="#3c3f41" stroke-width="0.5"/><path d="M9.5 16.2H12.8Q14.8 16.2 14.8 14V11.2Q14.8 9.2 12.9 9.2V11.3Q12.9 12.4 11.8 12.4H8V14.5Q8 16.2 9.5 16.2Z" fill="#f3c52e" stroke="#3c3f41" stroke-width="0.5"/></svg>
<div class="t" style="left:594px;top:64px">classList.py</div>
<svg style="left:665px;top:67px" width="9" height="9"><path d="M0.5 0.5L8.5 8.5M8.5 0.5L0.5 8.5" stroke="#6e7173" stroke-width="1.1"/></svg>
<svg style="left:690px;top:63px" width="16" height="16" viewBox="0 0 16 16"><path d="M1 5L5 1V5Z" fill="#9aa7b0"/><path d="M6 1H11V8H6Z" fill="#9aa7b0"/><path d="M1 6H6V15H1Z" fill="#9aa7b0"/><path d="M7 6.5H10.8Q12.5 6.5 12.5 8.2V10.8H8.8Q7.8 10.8 7.8 11.8V13.5H6.5Q4.5 13.5 4.5 11.5V9Q4.5 6.5 7 6.5Z" fill="#3d96d6" stroke="#3c3f41" stroke-width="0.5"/><path d="M9.5 16.2H12.8Q14.8 16.2 14.8 14V11.2Q14.8 9.2 12.9 9.2V11.3Q12.9 12.4 11.8 12.4H8V14.5Q8 16.2 9.5 16.2Z" fill="#f3c52e" stroke="#3c3f41" stroke-width="0.5"/></svg>
<div class="t" style="left:708px;top:64px">stark.py</div>
<svg style="left:761px;top:67px" width="9" height="9"><path d="M0.5 0.5L8.5 8.5M8.5 0.5L0.5 8.5" stroke="#6e7173" stroke-width="1.1"/></svg>
<svg style="left:787px;top:63px" width="16" height="16" viewBox="0 0 16 16"><path d="M1 5L5 1V5Z" fill="#9aa7b0"/><path d="M6 1H11V8H6Z" fill="#9aa7b0"/><path d="M1 6H6V15H1Z" fill="#9aa7b0"/><path d="M7 6.5H10.8Q12.5 6.5 12.5 8.2V10.8H8.8Q7.8 10.8 7.8 11.8V13.5H6.5Q4.5 13.5 4.5 11.5V9Q4.5 6.5 7 6.5Z" fill="#3d96d6" stroke="#3c3f41" stroke-width="0.5"/><path d="M9.5 16.2H12.8Q14.8 16.2 14.8 14V11.2Q14.8 9.2 12.9 9.2V11.3Q12.9 12.4 11.8 12.4H8V14.5Q8 16.2 9.5 16.2Z" fill="#f3c52e" stroke="#3c3f41" stroke-width="0.5"/></svg>
<div class="t" style="left:805px;top:64px">userinfo.py</div>
<svg style="left:875px;top:67px" width="9" height="9"><path d="M0.5 0.5L8.5 8.5M8.5 0.5L0.5 8.5" stroke="#6e7173" stroke-width="1.1"/></svg>
<svg style="left:900px;top:63px" width="16" height="16" viewBox="0 0 16 16"><path d="M1 5L5 1V5Z" fill="#9aa7b0"/><path d="M6 1H11V8H6Z" fill="#9aa7b0"/><path d="M1 6H6V15H1Z" fill="#9aa7b0"/><path d="M7 6.5H10.8Q12.5 6.5 12.5 8.2V10.8H8.8Q7.8 10.8 7.8 11.8V13.5H6.5Q4.5 13.5 4.5 11.5V9Q4.5 6.5 7 6.5Z" fill="#3d96d6" stroke="#3c3f41" stroke-width="0.5"/><path d="M9.5 16.2H12.8Q14.8 16.2 14.8 14V11.2Q14.8 9.2 12.9 9.2V11.3Q12.9 12.4 11.8 12.4H8V14.5Q8 16.2 9.5 16.2Z" fill="#f3c52e" stroke="#3c3f41" stroke-width="0.5"/></svg>
<div class="t" style="left:918px;top:64px">course.py</div>
<svg style="left:989px;top:67px" width="9" height="9"><path d="M0.5 0.5L8.5 8.5M8.5 0.5L0.5 8.5" stroke="#6e7173" stroke-width="1.1"/></svg>
<svg style="left:1356px;top:64px" width="4" height="14"><circle cx="2" cy="2" r="1.5" fill="#aeb0b2"/><circle cx="2" cy="7" r="1.5" fill="#aeb0b2"/><circle cx="2" cy="12" r="1.5" fill="#aeb0b2"/></svg>
<div class="a" style="left:376px;top:85px;width:994px;height:645px;background:#2b2b2b"></div>
<div class="a" style="left:376px;top:85px;width:60px;height:645px;background:#313335"></div>
<div class="a" style="left:434px;top:85px;width:1px;height:621px;background:#555555"></div>
<div class="a" style="left:376px;top:706px;width:994px;height:24px;background:#313335;border-top:1px solid #37393b"></div>
<div class="a" style="left:376px;top:503px;width:994px;height:22px;background:#323232"></div>
<div class="m" style="left:387px;top:86px;color:#606366">1</div>
<div class="m" style="left:440px;top:86px"><span class="cm"># -*- encoding: utf-8 -*-</span></div>
<div class="m" style="left:387px;top:108px;color:#606366">2</div>
<div class="m" style="left:440px;top:108px"><span class="doc">"""</span></div>
<div class="m" style="left:387px;top:130px;color:#606366">3</div>
<div class="m" style="left:440px;top:130px"><span class="doc">@File    : classList.py</span></div>
<div class="m" style="left:387px;top:152px;color:#606366">4</div>
<div class="m" style="left:440px;top:152px"><span class="doc">@Time    : 2022/3/6 14:29</span></div>
<div class="m" style="left:387px;top:174px;color:#606366">5</div>
<div class="m" style="left:440px;top:174px"><span class="doc">@Author  : simon</span></div>
<div class="m" style="left:387px;top:196px;color:#606366">6</div>
<div class="m" style="left:440px;top:196px"><span class="doc">@Email   : 294168604@qq.com</span></div>
<div class="m" style="left:387px;top:218px;color:#606366">7</div>
<div class="m" style="left:440px;top:218px"><span class="doc">@Software: PyCharm</span></div>
<div class="m" style="left:387px;top:240px;color:#606366">8</div>
<div class="m" style="left:440px;top:240px"><span class="doc">"""</span></div>
<div class="m" style="left:387px;top:262px;color:#606366">9</div>
<div class="m" style="left:440px;top:262px"><span class="kw">from</span> stark.service.v1 <span class="kw">import</span> StarkHandler<span class="kw">,</span>get_datetime_text<span class="kw">,</span>get_m2m_text</div>
<div class="m" style="left:379px;top:284px;color:#606366">10</div>
<div class="m" style="left:379px;top:306px;color:#606366">11</div>
<div class="m" style="left:379px;top:328px;color:#606366">12</div>
<div class="m" style="left:440px;top:328px"><span class="kw">class</span> ClassListHandler(StarkHandler):</div>
<div class="m" style="left:379px;top:350px;color:#606366">13</div>
<div class="m" style="left:440px;top:350px">    <span class="kw">def</span> <span class="fn">display_course</span>(<span class="slf">self</span><span class="kw">,</span> obj=<span class="kw">None</span><span class="kw">,</span> is_header=<span class="kw">None</span>):</div>
<div class="m" style="left:379px;top:372px;color:#606366">14</div>
<div class="m" style="left:440px;top:372px">        <span class="kw">if</span> is_header:</div>
<div class="m" style="left:379px;top:394px;color:#606366">15</div>
<div class="m" style="left:440px;top:394px">            <span class="kw">return</span> <span class="str">'<span class="cj">班级</span>'</span></div>
<div class="m" style="left:379px;top:416px;color:#606366">16</div>
<div class="m" style="left:440px;top:416px">        <span class="kw">return</span> <span class="str">"%s %s<span class="cj">期</span>"</span> % (obj.course.name<span class="kw">,</span> obj.semester<span class="kw">,</span>)</div>
<div class="m" style="left:379px;top:438px;color:#606366">17</div>
<div class="m" style="left:379px;top:460px;color:#606366">18</div>
<div class="m" style="left:440px;top:460px">    list_display = [<span class="str">'school'</span><span class="kw">,</span> display_course<span class="kw">,</span> <span class="str">'price'</span><span class="kw">,</span>get_datetime_text(<span class="str">'<span class="cj">开班日期</span>'</span><span class="kw">,</span> <span class="str">'start_date'</span>)<span class="kw">,</span></div>
<div class="m" style="left:379px;top:482px;color:#606366">19</div>
<div class="m" style="left:440px;top:482px">                    <span class="str">'class_teacher'</span><span class="kw">,</span>get_m2m_text(<span class="str">'<span class="cj">任课老师</span>'</span><span class="kw">,</span><span class="str">'tech_teachers'</span>)]</div>
<div class="m" style="left:379px;top:504px;color:#a4a3a3">20</div>
<svg style="left:504px;top:368px" width="112" height="3"><polyline points="0,0 2,2 4,0 6,2 8,0 10,2 12,0 14,2 16,0 18,2 20,0 22,2 24,0 26,2 28,0 30,2 32,0 34,2 36,0 38,2 40,0 42,2 44,0 46,2 48,0 50,2 52,0 54,2 56,0 58,2 60,0 62,2 64,0 66,2 68,0 70,2 72,0 74,2 76,0 78,2 80,0 82,2 84,0 86,2 88,0 90,2 92,0 94,2 96,0 98,2 100,0 102,2 104,0 106,2 108,0 110,2 112,0" fill="none" stroke="#9c986c" stroke-width="0.9"/></svg>
<svg style="left:768px;top:279px" width="8" height="3"><polyline points="0,0 2,2 4,0 6,2 8,0" fill="none" stroke="#c3b98a" stroke-width="0.9"/></svg>
<svg style="left:912px;top:279px" width="8" height="3"><polyline points="0,0 2,2 4,0 6,2 8,0" fill="none" stroke="#c3b98a" stroke-width="0.9"/></svg>
<svg style="left:720px;top:499px" width="8" height="3"><polyline points="0,0 2,2 4,0 6,2 8,0" fill="none" stroke="#c3b98a" stroke-width="0.9"/></svg>
<svg style="left:898px;top:499px" width="8" height="3"><polyline points="0,0 2,2 4,0 6,2 8,0" fill="none" stroke="#c3b98a" stroke-width="0.9"/></svg>
<svg style="left:430px;top:113px" width="9" height="12"><path d="M0.5 0.5h8v7l-4 4l-4-4z" fill="#2b2b2b" stroke="#707070"/><path d="M2.5 4.5h4" stroke="#707070"/></svg>
<svg style="left:430px;top:333px" width="9" height="12"><path d="M0.5 0.5h8v7l-4 4l-4-4z" fill="#2b2b2b" stroke="#707070"/><path d="M2.5 4.5h4" stroke="#707070"/></svg>
<svg style="left:430px;top:355px" width="9" height="12"><path d="M0.5 0.5h8v7l-4 4l-4-4z" fill="#2b2b2b" stroke="#707070"/><path d="M2.5 4.5h4" stroke="#707070"/></svg>
<svg style="left:430px;top:465px" width="9" height="12"><path d="M0.5 0.5h8v7l-4 4l-4-4z" fill="#2b2b2b" stroke="#707070"/><path d="M2.5 4.5h4" stroke="#707070"/></svg>
<svg style="left:430px;top:243px" width="9" height="12"><path d="M0.5 11.5h8v-7l-4-4l-4 4z" fill="#2b2b2b" stroke="#707070"/><path d="M2.5 7.5h4" stroke="#707070"/></svg>
<svg style="left:430px;top:419px" width="9" height="12"><path d="M0.5 11.5h8v-7l-4-4l-4 4z" fill="#2b2b2b" stroke="#707070"/><path d="M2.5 7.5h4" stroke="#707070"/></svg>
<svg style="left:430px;top:485px" width="9" height="12"><path d="M0.5 11.5h8v-7l-4-4l-4 4z" fill="#2b2b2b" stroke="#707070"/><path d="M2.5 7.5h4" stroke="#707070"/></svg>
<svg style="left:405px;top:463px" width="18" height="14"><circle cx="5.5" cy="7" r="4.5" stroke="#40b6e0" stroke-width="2" fill="none"/><circle cx="5.5" cy="7" r="1" fill="#40b6e0"/><path d="M12 14V3" stroke="#e05555" stroke-width="1.6"/><path d="M9 5l3-4l3 4z" fill="#e05555"/></svg>
<div class="a" style="left:471px;top:371px;width:1px;height:66px;background:#393939"></div>
<div class="a" style="left:503px;top:393px;width:1px;height:22px;background:#393939"></div>
<div class="a" style="left:471px;top:481px;width:1px;height:44px;background:#393939"></div>
<div class="a" style="left:913px;top:244px;width:155px;height:46px;border:3px solid #f23a3a"></div>
<div class="a" style="left:721px;top:479px;width:339px;height:29px;border:3px solid #f23a3a"></div>
<div class="a" style="left:1356px;top:287px;width:13px;height:2px;background:#79714f"></div>
<div class="a" style="left:1356px;top:375px;width:13px;height:2px;background:#79714f"></div>
<div class="a" style="left:1356px;top:485px;width:13px;height:2px;background:#79714f"></div>
<div class="a" style="left:1356px;top:507px;width:13px;height:2px;background:#79714f"></div>
<svg style="left:1300px;top:92px" width="12" height="11"><path d="M6 0L12 11H0z" fill="#8f8770"/><path d="M6 3.5v3.5M6 8.3v1.7" stroke="#2b2b2b" stroke-width="1.6"/></svg>
<div class="t" style="left:1315px;top:91px;color:#a9b7c6">6</div>
<svg style="left:1332px;top:95px" width="10" height="6"><path d="M1 5L5 1L9 5" stroke="#aeb0b2" stroke-width="1.3" fill="none"/></svg>
<svg style="left:1353px;top:95px" width="10" height="6"><path d="M1 1L5 5L9 1" stroke="#aeb0b2" stroke-width="1.3" fill="none"/></svg>
<div class="a" style="left:1370px;top:58px;width:1px;height:892px;background:#323232"></div>
<svg style="left:1376px;top:67px" width="11" height="13"><ellipse cx="5.5" cy="2.2" rx="5.5" ry="2.2" fill="#c5c7c9"/><path d="M0 4.2q5.5 3 11 0v2.6q-5.5 3-11 0z M0 8.4q5.5 3 11 0v2.4q-5.5 3-11 0z" fill="#c5c7c9"/></svg>
<div class="s v" style="left:1387px;top:85px;transform:rotate(90deg);transform-origin:left top;color:#bbbbbb">Database</div>
<svg style="left:1376px;top:156px" width="11" height="9"><path d="M0 0h2v2h-2zM3 0h3v2h-3zM7 0h4v2h-4zM0 3.5h2v2h-2zM3 3.5h3v2h-3zM7 3.5h4v2h-4zM0 7h2v2h-2zM3 7h3v2h-3zM7 7h4v2h-4z" fill="#c5c7c9"/></svg>
<div class="s v" style="left:1387px;top:171px;transform:rotate(90deg);transform-origin:left top;color:#bbbbbb">SciView</div>
<div class="a" style="left:30px;top:730px;width:1340px;height:1px;background:#323232"></div>
<div class="t" style="left:36px;top:737px">Run:</div>
<div class="a" style="left:83px;top:738px;width:12px;height:12px;background:#c5c7c9;border-radius:2px"></div>
<svg style="left:83px;top:738px" width="12" height="12"><circle cx="4.3" cy="6.8" r="1.9" stroke="#1d4a2a" stroke-width="1.4" fill="none"/><path d="M6.3 2.5v6.3M8.8 4.8v4.8q0 1.6-1.6 1.6M8.8 2.5v1" stroke="#1d4a2a" stroke-width="1.4" fill="none"/></svg>
<div class="a" style="left:92px;top:748px;width:4px;height:4px;background:#00d000;border-radius:50%"></div>
<div class="t" style="left:100px;top:737px">crm_simon</div>
<svg style="left:168px;top:740px" width="9" height="9"><path d="M0.5 0.5L8.5 8.5M8.5 0.5L0.5 8.5" stroke="#6e7173" stroke-width="1.1"/></svg>
<svg style="left:1324px;top:737px" width="13" height="13"><rect x="4.9" y="0" width="3.2" height="13" rx="0.8" transform="rotate(0 6.5 6.5)" fill="#aeb0b2"/><rect x="4.9" y="0" width="3.2" height="13" rx="0.8" transform="rotate(60 6.5 6.5)" fill="#aeb0b2"/><rect x="4.9" y="0" width="3.2" height="13" rx="0.8" transform="rotate(120 6.5 6.5)" fill="#aeb0b2"/><circle cx="6.5" cy="6.5" r="4.68" fill="#aeb0b2"/><circle cx="6.5" cy="6.5" r="1.95" fill="#3c3f41"/></svg>
<div class="a" style="left:1351px;top:743px;width:12px;height:2px;background:#aeb0b2"></div>
<div class="a" style="left:87px;top:758px;width:1283px;height:191px;background:#2b2b2b"></div>
<div class="a" style="left:58px;top:758px;width:1px;height:191px;background:#323232"></div>
<div class="a" style="left:1361px;top:921px;width:8px;height:26px;background:#505355"></div>
<div class="m" style="left:100px;top:752px;overflow:hidden"><span class="er">  File "&lt;frozen importlib._bootstrap&gt;", line 241, in _call_with_frames_removed</span></div>
<div class="m" style="left:100px;top:774px;overflow:hidden"><span class="er">  File "</span><span class="lk">D:\pyCharm\crm_simon\web\stark.py</span><span class="er">", line 17, in &lt;module&gt;</span></div>
<div class="m" style="left:100px;top:796px;overflow:hidden"><span class="er">    from web.views.classList import ClassListHandler</span></div>
<div class="m" style="left:100px;top:818px;overflow:hidden"><span class="er">  File "</span><span class="lk">D:\pyCharm\crm_simon\web\views\classList.py</span><span class="er">", line 12, in &lt;module&gt;</span></div>
<div class="m" style="left:100px;top:840px;overflow:hidden"><span class="er">    class ClassListHandler(StarkHandler):</span></div>
<div class="m" style="left:100px;top:862px;overflow:hidden"><span class="er">  File "</span><span class="lk">D:\pyCharm\crm_simon\web\views\classList.py</span><span class="er">", line 19, in ClassListHandler</span></div>
<div class="m" style="left:100px;top:884px;overflow:hidden"><span class="er">    'class_teacher',get_m2m_text('tech_teachers')]</span></div>
<div class="m" style="left:100px;top:906px;overflow:hidden"><span class="er">NameError: name 'get_m2m_text' is not defined</span></div>
<div class="a" style="left:88px;top:756px;width:1282px;height:2px;background:#3c3f41"></div>
<div class="a" style="left:68px;top:755px;width:120px;height:3px;background:#6f7376"></div>
<svg style="left:37px;top:764px" width="16" height="16"><path d="M6.5 14.2A4.6 4.6 0 0 1 6.5 5H10" stroke="#499c54" stroke-width="2.1" fill="none"/><path d="M9.4 0.9L14.2 4.8L9.4 8.8Z" fill="#499c54"/><rect x="8" y="10" width="5" height="5" fill="#c4c6c8"/></svg>
<svg style="left:37px;top:791px" width="15" height="15"><path d="M2 13l6-6" stroke="#aeb0b2" stroke-width="2.5"/><circle cx="10" cy="5" r="3.5" fill="#aeb0b2"/><circle cx="11.5" cy="3.5" r="1.8" fill="#3c3f41"/></svg>
<div class="a" style="left:34px;top:813px;width:20px;height:1px;background:#4b4d4f"></div>
<div class="a" style="left:39px;top:826px;width:10px;height:10px;background:#d65555"></div>
<div class="a" style="left:34px;top:847px;width:20px;height:1px;background:#4b4d4f"></div>
<svg style="left:37px;top:858px" width="13" height="11"><path d="M0 0h6v5h-6zM7 0h6v5h-6zM0 6h13v5h-13z" fill="#aeb0b2"/></svg>
<div class="a" style="left:34px;top:880px;width:20px;height:1px;background:#4b4d4f"></div>
<svg style="left:37px;top:889px" width="15" height="15"><path d="M1 14L6 9" stroke="#aeb0b2" stroke-width="1.5"/><path d="M9 1L14 6L12 7L10.5 10.5L4.5 4.5L8 3Z" fill="#aeb0b2"/></svg>
<svg style="left:66px;top:766px" width="12" height="14"><path d="M6 13V2M1.5 6.5L6 2l4.5 4.5" stroke="#aeb0b2" stroke-width="1.6" fill="none"/></svg>
<svg style="left:66px;top:792px" width="12" height="14"><path d="M6 1v11M1.5 7.5L6 12l4.5-4.5" stroke="#aeb0b2" stroke-width="1.6" fill="none"/></svg>
<svg style="left:65px;top:818px" width="15" height="14"><path d="M1 2h13M1 7h10a2.5 2.5 0 0 1 0 5h-4M1 12h3" stroke="#aeb0b2" stroke-width="1.5" fill="none"/><path d="M9 10l-3 2l3 2z" fill="#aeb0b2"/></svg>
<div class="a" style="left:62px;top:840px;width:22px;height:22px;background:#4c5052;border-radius:3px"></div>
<svg style="left:65px;top:843px" width="16" height="14"><path d="M1 3h6M1 7h6M1 11h14" stroke="#aeb0b2" stroke-width="1.5"/><path d="M11.5 1v7M8.5 5.5l3 3l3-3" stroke="#aeb0b2" stroke-width="1.5" fill="none"/></svg>
<svg style="left:66px;top:871px" width="14" height="14"><path d="M3.5 0h7v3h-7z M0 4h14v6h-2.5v4h-9v-4h-2.5z" fill="#aeb0b2"/><path d="M4 9h6v3h-6z" fill="#3c3f41"/><circle cx="12" cy="5.5" r="0.7" fill="#3c3f41"/></svg>
<svg style="left:67px;top:896px" width="12" height="14"><path d="M0 2.5h12M4 0.8h4" stroke="#aeb0b2" stroke-width="1.6"/><path d="M1.5 4h9l-0.8 9h-7.4z" fill="#aeb0b2"/></svg>
<div class="s v" style="left:13px;top:825px;transform:rotate(-90deg);transform-origin:left top;color:#bbbbbb">Structure</div>
<svg style="left:15px;top:829px" width="10" height="10"><path d="M0 5h4v4h-4zM5 5h4v4h-4zM5 0h4v4h-4z" fill="#c5c7c9"/></svg>
<div class="s v" style="left:13px;top:920px;transform:rotate(-90deg);transform-origin:left top;color:#bbbbbb">Bookmarks</div>
<svg style="left:14px;top:925px" width="10" height="12"><path d="M0 0h10v12l-5-4l-5 4z" fill="#c5c7c9"/></svg>
<div class="a" style="left:8px;top:949px;width:1384px;height:1px;background:#323232"></div>
<div class="a" style="left:151px;top:950px;width:56px;height:21px;background:#2d2f30"></div>
<div class="s" style="left:58px;top:955px;letter-spacing:-0.15px">Version Control</div>
<div class="s" style="left:177px;top:955px;letter-spacing:-0.15px">Run</div>
<div class="s" style="left:234px;top:955px;letter-spacing:-0.15px">TODO</div>
<div class="s" style="left:303px;top:955px;letter-spacing:-0.15px">Problems</div>
<div class="s" style="left:390px;top:955px;letter-spacing:-0.15px">Terminal</div>
<div class="s" style="left:475px;top:955px;letter-spacing:-0.15px">Python Packages</div>
<div class="s" style="left:607px;top:955px;letter-spacing:-0.15px">Python Console</div>
<svg style="left:42px;top:955px" width="10" height="14"><path d="M2.5 1v12M2.5 9q6 0 6-7" stroke="#aeb0b2" stroke-width="1.8" fill="none"/><circle cx="2.5" cy="2" r="1.6" fill="#aeb0b2"/><circle cx="8.5" cy="2" r="1.6" fill="#aeb0b2"/><circle cx="2.5" cy="12" r="1.6" fill="#aeb0b2"/></svg>
<svg style="left:161px;top:955px" width="13" height="13"><path d="M0.5 0l8.5 5.5l-8.5 5.5z" fill="#aeb0b2"/><circle cx="10" cy="10.5" r="2" fill="#19c719"/></svg>
<svg style="left:219px;top:956px" width="11" height="11"><path d="M0 0h2v2h-2zM3 0h8v2h-8zM0 4h2v2h-2zM3 4h8v2h-8zM0 8h2v2h-2zM3 8h8v2h-8z" fill="#aeb0b2"/></svg>
<svg style="left:287px;top:955px" width="12" height="12"><circle cx="6" cy="6" r="6" fill="#aeb0b2"/><path d="M6 2.5v4.5M6 8.5v1.5" stroke="#3c3f41" stroke-width="1.8"/></svg>
<svg style="left:374px;top:956px" width="12" height="11"><rect width="12" height="11" fill="#aeb0b2"/><path d="M2 3l2.5 2l-2.5 2M5 8h4" stroke="#3c3f41" stroke-width="1.2" fill="none"/></svg>
<svg style="left:459px;top:954px" width="12" height="14"><path d="M6 0l6 3l-6 3l-6-3z" fill="#aeb0b2"/><path d="M0 6l6 3l6-3M0 9.5l6 3l6-3" stroke="#aeb0b2" stroke-width="1.5" fill="none"/></svg>
<svg style="left:591px;top:955px" width="12" height="13"><path d="M3.5 0h4q2 0 2 2v3.5h-5v1h-3q-1.5 0-1.5-2v-2.5q0-2 2-2z" fill="#aeb0b2"/><path d="M8.5 13h-4q-2 0-2-2v-3.5h5v-1h3q1.5 0 1.5 2v2.5q0 2-2 2z" fill="#aeb0b2"/></svg>
<div class="a" style="left:1291px;top:955px;width:13px;height:13px;border-radius:50%;background:#3f9a44"></div>
<div class="a" style="left:1294px;top:955px;font:bold 10px/13px 'Liberation Sans';color:#fff">3</div>
<div class="s" style="left:1308px;top:955px">Event Log</div>
<div class="a" style="left:8px;top:971px;width:1384px;height:1px;background:#323232"></div>
<svg style="left:12px;top:975px" width="16" height="14"><rect x="5.5" y="1.5" width="8" height="9" stroke="#aeb0b2" fill="none"/><path d="M2.5 4V12.5H11" stroke="#aeb0b2" fill="none"/></svg>
<div class="t" style="left:35px;top:974px;letter-spacing:0.1px">Data sources detected: Connection properties are detected. // Configure (today 10:04)</div>
<div class="t" style="left:1104px;top:974px;color:#bbbbbb">20:1</div>
<div class="t" style="left:1140px;top:974px;color:#bbbbbb">CRLF</div>
<div class="t" style="left:1181px;top:974px;color:#808080">UTF-8</div>
<div class="t" style="left:1226px;top:974px;color:#bbbbbb">4 spaces</div>
<div class="t" style="left:1289px;top:974px;color:#bbbbbb">Python 3.10</div>
<svg style="left:1367px;top:975px" width="11" height="13"><path d="M1 5V3a3 3 0 0 1 6 0" stroke="#aeb0b2" stroke-width="1.5" fill="none"/><rect x="3" y="6" width="8" height="7" fill="#aeb0b2"/></svg>
</body></html>
